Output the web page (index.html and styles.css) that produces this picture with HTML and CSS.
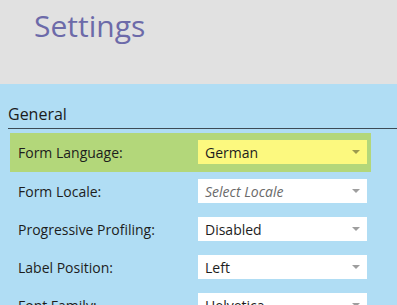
FILE: index.html
```html
<!doctype html>
<html>
<head>
  <link rel="stylesheet" href="styles.css">
</head>
<body>
  <div class="header">
    <h1 class="title">Settings</h1>
  </div>

  <div class="panel">
    <div class="sectionTitle">General</div>

    <div class="row highlight">
      <div class="label">Form Language:</div>
      <div class="picker yellow"><span>German</span><i class="arrow"></i></div>
    </div>
    <div class="row">
      <div class="label">Form Locale:</div>
      <div class="picker"><span class="placeholder">Select Locale</span><i class="arrow"></i></div>
    </div>
    <div class="row">
      <div class="label">Progressive Profiling:</div>
      <div class="picker"><span>Disabled</span><i class="arrow"></i></div>
    </div>
    <div class="row">
      <div class="label">Label Position:</div>
      <div class="picker"><span>Left</span><i class="arrow"></i></div>
    </div>
    <div class="row">
      <div class="label">Font Family:</div>
      <div class="picker"><span>Helvetica</span><i class="arrow"></i></div>
    </div>
  </div>
</body>
</html>
```

FILE: styles.css
```css
body{
  margin:0;
  background:#b0ddf4;
  font-family:'Open Sans', sans-serif;
  overflow:hidden;
}
.header{
  background:#e1e1e1;
  height:84px;
  padding:5px 0 0 34px;
  box-sizing:border-box;
}
.title{
  margin:0;
  font-size:30px;
  line-height:41px;
  font-weight:normal;
  color:#6c6aa9;
}
.panel{
  padding:19px 0 0 8px;
}
.sectionTitle{
  font-size:16px;
  line-height:22px;
  color:#1b1b1b;
  padding-bottom:3px;
  border-bottom:1px solid #3d4b55;
  margin-bottom:4px;
}
.row{
  display:flex;
  align-items:center;
  width:361px;
  height:38px;
  margin-left:2px;
  padding-left:8px;
  box-sizing:border-box;
}
.highlight{
  background:#b3d77a;
  height:39px;
  padding-bottom:1px;
}
.label{
  width:180px;
  font-size:14px;
  color:#1d1d1d;
}
.picker{
  display:flex;
  align-items:center;
  justify-content:space-between;
  width:169px;
  height:24px;
  padding:0 7px;
  box-sizing:border-box;
  background:#fff;
  font-size:14px;
  color:#1d1d1d;
}
.yellow{
  background:#fcf97f;
}
.placeholder{
  font-style:italic;
  color:#6a6a6a;
}
.arrow{
  width:0;
  height:0;
  border-left:4px solid transparent;
  border-right:4px solid transparent;
  border-top:4px solid rgba(0,0,0,0.38);
}
```
